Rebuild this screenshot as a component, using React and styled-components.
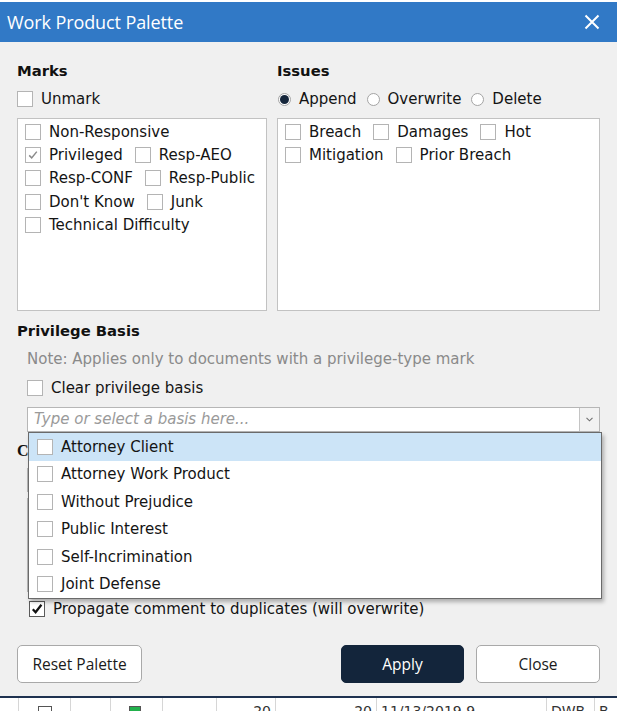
import React from "react";
import styled, { createGlobalStyle, css } from "styled-components";

const Global = createGlobalStyle`
  html, body { margin: 0; padding: 0; background: #ffffff; }
  body { font-family: "DejaVu Sans", Verdana, sans-serif; color: #1a1a1a; }
  * { box-sizing: border-box; }
`;

const Page = styled.div`
  width: 617px;
  height: 711px;
  display: flex;
  flex-direction: column;
  overflow: hidden;
`;

const TopStrip = styled.div`
  height: 2px;
  background: #ffffff;
  flex: none;
`;

const Dialog = styled.div`
  display: flex;
  flex-direction: column;
  flex: none;
`;

const TitleBar = styled.div`
  height: 40px;
  background: #3179c6;
  display: flex;
  align-items: center;
  justify-content: space-between;
  padding: 0 17px 0 7px;
  color: #ffffff;
`;

const Title = styled.div`
  font-family: "Open Sans", sans-serif;
  font-size: 18px;
  letter-spacing: -0.1px;
`;

const CloseIcon = styled.svg`
  width: 16px;
  height: 16px;
  display: block;
`;

const Body = styled.div`
  height: 654px;
  background: #f0f0f0;
  padding: 19px 17px 0 17px;
  display: flex;
  flex-direction: column;
`;

const TopColumns = styled.div`
  display: grid;
  grid-template-columns: 250px 323px;
  column-gap: 10px;
`;

const Column = styled.div`
  display: flex;
  flex-direction: column;
`;

const Heading = styled.div`
  font-family: "DejaVu Sans", Verdana, sans-serif;
  font-weight: 700;
  font-size: 14.8px;
  line-height: 20px;
  height: 20px;
  color: #111;
  margin-top: ${(p) => p.$mt ?? 0}px;
  white-space: nowrap;
  ${(p) =>
    p.$serif &&
    css`
      font-family: "Liberation Serif", serif;
      font-size: 16px;
    `}
`;

const OptionRow = styled.div`
  display: flex;
  align-items: center;
  height: 16px;
  margin-top: ${(p) => p.$mt ?? 0}px;
  margin-left: ${(p) => p.$ml ?? 0}px;
`;

const Label = styled.span`
  font-size: 15px;
  line-height: 16px;
  color: #141414;
  white-space: nowrap;
  margin-left: ${(p) => p.$gap ?? 8}px;
  margin-right: ${(p) => p.$after ?? 0}px;
`;

const Box = styled.span`
  flex: none;
  width: 16px;
  height: 16px;
  background: #ffffff;
  border: 1px solid ${(p) => (p.$dark ? "#5a5a5a" : "#b4b4b4")};
  display: inline-flex;
  align-items: center;
  justify-content: center;
`;

const CheckSvg = styled.svg`
  width: 12px;
  height: 12px;
  display: block;
`;

function Checkbox({ checked, dark }) {
  return (
    <Box $dark={dark}>
      {checked && (
        <CheckSvg viewBox="0 0 12 12">
          <path
            d={dark ? "M1.8 6.2 L4.6 9.2 L10.4 1.8" : "M2.2 6.4 L4.7 8.9 L9.8 2.6"}
            fill="none"
            stroke={dark ? "#111" : "#8a8a8a"}
            strokeWidth={dark ? 2.3 : 1.5}
          />
        </CheckSvg>
      )}
    </Box>
  );
}

const RadioCircle = styled.span`
  flex: none;
  width: 13px;
  height: 13px;
  border-radius: 50%;
  background: #ffffff;
  border: 1px solid #a4a4a4;
  display: inline-flex;
  align-items: center;
  justify-content: center;
  &::after {
    content: "";
    width: 9px;
    height: 9px;
    border-radius: 50%;
    background: ${(p) => (p.$on ? "#15263b" : "transparent")};
  }
`;

const ListBox = styled.div`
  margin-top: 11px;
  height: 193px;
  background: #ffffff;
  border: 1px solid #c2c2c2;
  padding: 1px 7px;
  display: flex;
  flex-direction: column;
`;

const ListRow = styled.div`
  display: flex;
  align-items: center;
  height: 23.3px;
`;

const Item = styled.div`
  display: flex;
  align-items: center;
`;

const Note = styled.div`
  font-size: 15px;
  line-height: 18px;
  color: #8a8a8a;
  margin: 9px 0 0 10px;
  white-space: nowrap;
`;

const ComboWrap = styled.div`
  position: relative;
  margin: 11px 0 0 10px;
  height: 25px;
  display: flex;
  background: #ffffff;
  border: 1px solid #b6b6b6;
`;

const ComboInput = styled.div`
  flex: 1;
  font-size: 15px;
  font-style: italic;
  color: #9a9a9a;
  line-height: 23px;
  padding-left: 6px;
  white-space: nowrap;
`;

const ComboButton = styled.div`
  width: 20px;
  border-left: 1px solid #c4c4c4;
  background: #f2f2f2;
  display: flex;
  align-items: center;
  justify-content: center;
`;

const Chevron = styled.svg`
  width: 7px;
  height: 5px;
  display: block;
`;

const Dropdown = styled.div`
  position: absolute;
  left: 0px;
  top: 24px;
  width: 574px;
  background: #ffffff;
  border: 1px solid #6a6a6a;
  box-shadow: 2px 3px 4px rgba(0, 0, 0, 0.28);
  z-index: 10;
  display: flex;
  flex-direction: column;
`;

const DropRow = styled.div`
  height: 27.5px;
  display: flex;
  align-items: center;
  padding-left: 8px;
  background: ${(p) => (p.$hl ? "#cce4f7" : "#ffffff")};
`;

const CommentArea = styled.div`
  display: flex;
  flex-direction: column;
  margin-top: 9px;
`;

const SmallInput = styled.div`
  margin: 7px 0 0 10px;
  height: 24px;
  border: 1px solid #b6b6b6;
  background: #ffffff;
`;

const TextArea = styled.div`
  margin: 6px 0 0 10px;
  height: 94px;
  border: 1px solid #b6b6b6;
  background: #ffffff;
`;

const ButtonRow = styled.div`
  margin-top: 28px;
  display: flex;
  align-items: center;
`;

const Button = styled.button`
  height: 38px;
  width: ${(p) => p.$w}px;
  border-radius: 5px;
  font-family: "Open Sans", sans-serif;
  font-size: 15.5px;
  border: 1px solid ${(p) => (p.$primary ? "#13253b" : "#a9a9a9")};
  background: ${(p) => (p.$primary ? "#13253b" : "#ffffff")};
  color: ${(p) => (p.$primary ? "#ffffff" : "#1a1a1a")};
  margin-left: ${(p) => p.$ml ?? 0}px;
  padding: 0;
`;

const Spacer = styled.div`
  flex: 1;
`;

const BottomStrip = styled.div`
  flex: 1;
  border-top: 2px solid #1f3250;
  background: #ffffff;
  display: flex;
  overflow: hidden;
`;

const Cell = styled.div`
  width: ${(p) => p.$w}px;
  flex: none;
  border-right: 1px solid #d6d6d6;
  overflow: hidden;
  font-family: "DejaVu Sans", sans-serif;
  font-size: 14px;
  color: #333;
  text-align: ${(p) => p.$align || "left"};
  padding: 5px 4px 0;
  line-height: 16px;
  white-space: nowrap;
`;

const CellIcon = styled.span`
  display: inline-block;
  width: ${(p) => p.$w || 14}px;
  height: 10px;
  border: 1px solid #555;
  margin-top: 1px;
  margin-left: ${(p) => p.$ml || 0}px;
  background: ${(p) => p.$bg || "#fff"};
`;

const marks = [
  [{ t: "Non-Responsive" }],
  [{ t: "Privileged", c: true }, { t: "Resp-AEO" }],
  [{ t: "Resp-CONF" }, { t: "Resp-Public" }],
  [{ t: "Don't Know" }, { t: "Junk" }],
  [{ t: "Technical Difficulty" }],
];

const issues = [
  [{ t: "Breach" }, { t: "Damages" }, { t: "Hot" }],
  [{ t: "Mitigation" }, { t: "Prior Breach" }],
];

const bases = [
  "Attorney Client",
  "Attorney Work Product",
  "Without Prejudice",
  "Public Interest",
  "Self-Incrimination",
  "Joint Defense",
];

function Rows({ rows }) {
  return rows.map((row, i) => (
    <ListRow key={i}>
      {row.map((it, j) => (
        <Item key={j}>
          <Checkbox checked={it.c} />
          <Label $after={j < row.length - 1 ? 12 : 0}>{it.t}</Label>
        </Item>
      ))}
    </ListRow>
  ));
}

export default function App() {
  return (
    <Page>
      <Global />
      <TopStrip />
      <Dialog>
        <TitleBar>
          <Title>Work Product Palette</Title>
          <CloseIcon viewBox="0 0 16 16">
            <path d="M1.5 1.5 L14.5 14.5 M14.5 1.5 L1.5 14.5" stroke="#fff" strokeWidth="2" />
          </CloseIcon>
        </TitleBar>
        <Body>
          <TopColumns>
            <Column>
              <Heading>Marks</Heading>
              <OptionRow $mt={10}>
                <Checkbox />
                <Label>Unmark</Label>
              </OptionRow>
              <ListBox>
                <Rows rows={marks} />
              </ListBox>
            </Column>
            <Column>
              <Heading>Issues</Heading>
              <OptionRow $mt={10} $ml={1}>
                <RadioCircle $on />
                <Label $gap={8} $after={10}>Append</Label>
                <RadioCircle />
                <Label $gap={8} $after={10}>Overwrite</Label>
                <RadioCircle />
                <Label $gap={8}>Delete</Label>
              </OptionRow>
              <ListBox>
                <Rows rows={issues} />
              </ListBox>
            </Column>
          </TopColumns>

          <Heading $mt={10}>Privilege Basis</Heading>
          <Note>Note: Applies only to documents with a privilege-type mark</Note>
          <OptionRow $mt={12} $ml={10}>
            <Checkbox />
            <Label $gap={8}>Clear privilege basis</Label>
          </OptionRow>
          <ComboWrap>
            <ComboInput>Type or select a basis here...</ComboInput>
            <ComboButton>
              <Chevron viewBox="0 0 7 5">
                <path d="M0.5 0.8 L3.5 3.8 L6.5 0.8" fill="none" stroke="#707070" strokeWidth="1.1" />
              </Chevron>
            </ComboButton>
            <Dropdown>
              {bases.map((b, i) => (
                <DropRow key={b} $hl={i === 0}>
                  <Checkbox />
                  <Label>{b}</Label>
                </DropRow>
              ))}
            </Dropdown>
          </ComboWrap>

          <CommentArea>
            <Heading $serif>Comment</Heading>
            <SmallInput />
            <TextArea />
          </CommentArea>

          <OptionRow $mt={9} $ml={12}>
            <Checkbox checked dark />
            <Label $gap={8}>Propagate comment to duplicates (will overwrite)</Label>
          </OptionRow>

          <ButtonRow>
            <Button $w={125}>Reset Palette</Button>
            <Spacer />
            <Button $w={123} $primary>Apply</Button>
            <Button $w={124} $ml={12}>Close</Button>
          </ButtonRow>
        </Body>
      </Dialog>
      <BottomStrip>
        <Cell $w={19} />
        <Cell $w={52} $align="center"><CellIcon /></Cell>
        <Cell $w={40} />
        <Cell $w={52}><CellIcon $bg="#22b14c" $w={12} $ml={14} /></Cell>
        <Cell $w={54} />
        <Cell $w={59} $align="right">20</Cell>
        <Cell $w={101} $align="right">20</Cell>
        <Cell $w={170}>11/13/2019 9</Cell>
        <Cell $w={48}>DWB</Cell>
        <Cell $w={40}>B</Cell>
      </BottomStrip>
    </Page>
  );
}
